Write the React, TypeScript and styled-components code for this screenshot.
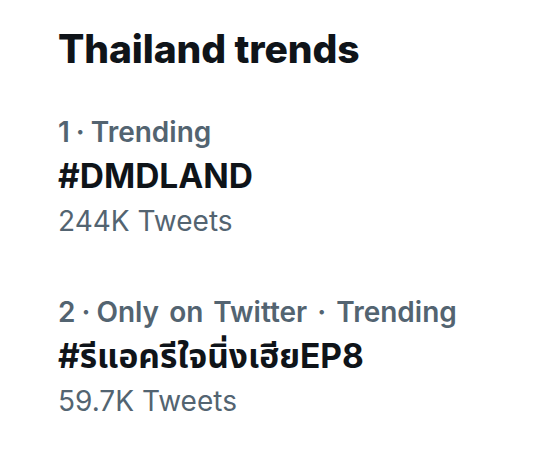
import React from "react";
import styled, { createGlobalStyle } from "styled-components";

const Global = createGlobalStyle`
  html, body { margin: 0; padding: 0; background: #ffffff; }
  body { font-family: Inter, "Noto Sans", "Noto Sans Thai", sans-serif; }
`;

const Panel = styled.section`
  width: 553px;
  height: 464px;
  box-sizing: border-box;
  padding: 25px 0 0 58px;
  display: flex;
  flex-direction: column;
  background: #ffffff;
`;

const Title = styled.h2`
  margin: 0 0 42px 0;
  font-size: 39px;
  line-height: 48px;
  font-weight: 800;
  color: #0f1419;
  letter-spacing: -0.1px;
`;

const Trend = styled.div<{ $gapAfter?: number }>`
  display: flex;
  flex-direction: column;
  gap: 7px;
  margin-bottom: ${(p) => p.$gapAfter ?? 0}px;
`;

const Meta = styled.div`
  font-size: 28px;
  line-height: 34px;
  font-weight: 600;
  color: #536471;
  word-spacing: 3px;
`;

const RankDot = styled.span`
  margin: 0 6px;
`;

const Name = styled.div`
  font-size: 33.5px;
  line-height: 40px;
  font-weight: 700;
  color: #0f1419;
`;

const Count = styled.div`
  font-size: 28px;
  line-height: 36px;
  font-weight: 400;
  color: #536471;
`;

const trends = [
  { rank: 1, meta: "Trending", name: "#DMDLAND", count: "244K Tweets" },
  { rank: 2, meta: "Only on Twitter · Trending", name: "#รีแอครีใจนิ่งเฮียEP8", count: "59.7K Tweets" },
];

export default function App() {
  return (
    <>
      <Global />
      <Panel>
        <Title>Thailand trends</Title>
        {trends.map((t, i) => (
          <Trend key={i} $gapAfter={i === 0 ? 56 : 0}>
            <Meta>
              {t.rank}
              <RankDot>·</RankDot>
              {t.meta}
            </Meta>
            <Name>{t.name}</Name>
            <Count>{t.count}</Count>
          </Trend>
        ))}
      </Panel>
    </>
  );
}
